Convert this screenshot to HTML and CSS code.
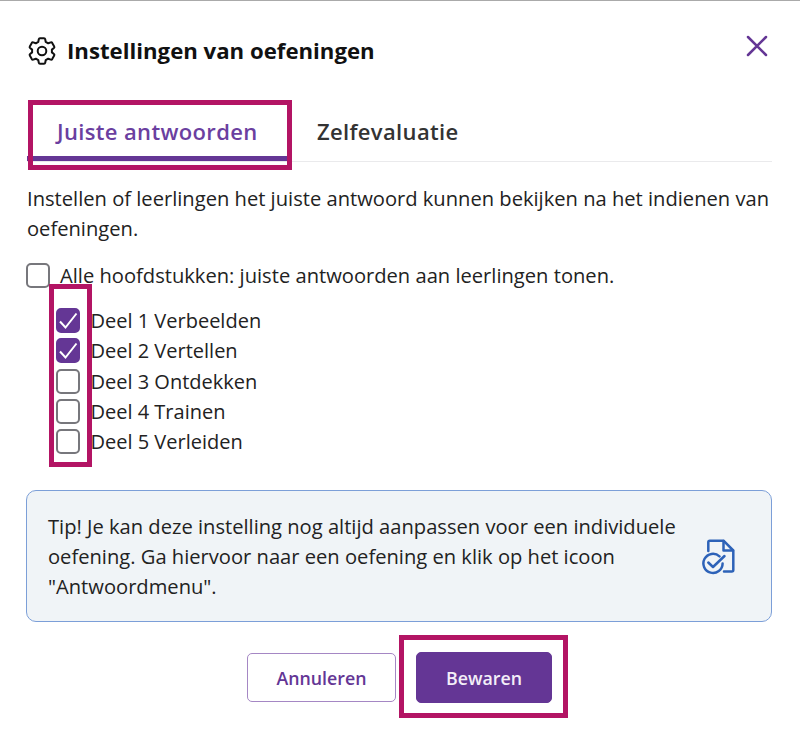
FILE: index.html
```html
<!DOCTYPE html>
<html lang="nl">
<head>
    <meta charset="UTF-8">
    <meta name="viewport" content="width=device-width, initial-scale=1.0">
    <title>Instellingen van oefeningen</title>
    <link rel="stylesheet" href="styles.css">
</head>
<body>
    <div class="modal">
        <header class="modal-header">
            <svg class="gear-icon" viewBox="0 0 28 28">
                <path d="M12 1.2H16Q17 1.2 17.2 2.2L17.7 4.8L20.2 6.3L22.8 5.4Q23.7 5.1 24.2 5.9L26.2 9.4Q26.7 10.3 25.9 11L23.9 12.6V15.4L25.9 17Q26.7 17.7 26.2 18.6L24.2 22.1Q23.7 22.9 22.8 22.6L20.2 21.7L17.7 23.2L17.2 25.8Q17 26.8 16 26.8H12Q11 26.8 10.8 25.8L10.3 23.2L7.8 21.7L5.2 22.6Q4.3 22.9 3.8 22.1L1.8 18.6Q1.3 17.7 2.1 17L4.1 15.4V12.6L2.1 11Q1.3 10.3 1.8 9.4L3.8 5.9Q4.3 5.1 5.2 5.4L7.8 6.3L10.3 4.8L10.8 2.2Q11 1.2 12 1.2Z"/>
                <circle cx="14" cy="14" r="4.3"/>
            </svg>
            <h1>Instellingen van oefeningen</h1>
            <button class="close-button" aria-label="Sluiten">
                <svg viewBox="0 0 22 22"><path d="M2 2L20 20M20 2L2 20"/></svg>
            </button>
        </header>

        <nav class="tabs">
            <a class="tab active highlight">Juiste antwoorden</a>
            <a class="tab">Zelfevaluatie</a>
        </nav>

        <main>
            <p class="intro">Instellen of leerlingen het juiste antwoord kunnen bekijken na het indienen van oefeningen.</p>

            <label class="check-all"><input type="checkbox"><span>Alle hoofdstukken: juiste antwoorden aan leerlingen tonen.</span></label>

            <div class="chapters highlight">
                <label><input type="checkbox" checked><span>Deel 1 Verbeelden</span></label>
                <label><input type="checkbox" checked><span>Deel 2 Vertellen</span></label>
                <label><input type="checkbox"><span>Deel 3 Ontdekken</span></label>
                <label><input type="checkbox"><span>Deel 4 Trainen</span></label>
                <label><input type="checkbox"><span>Deel 5 Verleiden</span></label>
            </div>

            <div class="tip">
                <p>Tip! Je kan deze instelling nog altijd aanpassen voor een individuele oefening. Ga hiervoor naar een oefening en klik op het icoon "Antwoordmenu".</p>
                <svg class="answer-icon" viewBox="0 0 34 36">
                    <path d="M6.3 12V3.2Q6.3 1.7 7.8 1.7H21.5L31.3 11.5V31Q31.3 32.5 29.8 32.5H22"/>
                    <path d="M21.5 2V11.5H31"/>
                    <path d="M17.5 17.3A9.6 9.6 0 1 0 20.6 24.5"/>
                    <path d="M6.3 23.5L11 28L22.5 17"/>
                </svg>
            </div>
        </main>

        <footer class="buttons">
            <button class="button">Annuleren</button>
            <div class="save highlight">
                <button class="button primary">Bewaren</button>
            </div>
        </footer>
    </div>
</body>
</html>
```

FILE: styles.css
```css
* {
    box-sizing: border-box;
}

body {
    margin: 0;
    background-color: #fff;
    color: #222;
    font-family: "Open Sans", sans-serif;
    font-size: 20px;
    line-height: 30px;
}

.modal {
    height: 730px;
    padding: 0 28px 0 27px;
    border-top: 1px solid #aaa;
    overflow: hidden;
}

/* header */
.modal-header {
    display: flex;
    align-items: center;
    height: 99px;
}

.gear-icon {
    width: 28px;
    height: 28px;
    margin-left: 0.5px;
    fill: none;
    stroke: #111;
    stroke-width: 2;
    stroke-linejoin: round;
}

h1 {
    margin: 1px 0 0 11.5px;
    color: #111;
    font-size: 22.2px;
    font-weight: 700;
}

.close-button {
    display: flex;
    margin: 0 4px 10px auto;
    padding: 0;
    background: none;
    border: none;
    cursor: pointer;
}

.close-button svg {
    width: 22px;
    height: 22px;
    fill: none;
    stroke: #643695;
    stroke-width: 2.5;
    stroke-linecap: round;
}

/* tabs */
.tabs {
    display: flex;
    height: 62px;
    border-bottom: 1px solid #eaeaec;
}

.tab {
    padding: 16px 30px 0;
    color: #333;
    font-size: 22px;
    font-weight: 600;
    letter-spacing: 0.35px;
    white-space: nowrap;
}

.tab.active {
    width: 260px;
    border-bottom: 5px solid #643695;
    color: #6b3fa0;
}

/* pink frames */
.highlight {
    position: relative;
}

.highlight::after {
    content: "";
    position: absolute;
    box-sizing: border-box;
    border: 5px solid #b31464;
    pointer-events: none;
}

.tab.highlight::after {
    inset: 0 -5px -14px 1px;
}

.chapters.highlight::after {
    top: -22px;
    left: -7px;
    width: 43px;
    height: 183px;
}

.save.highlight::after {
    inset: -17px -16px -15px -17px;
}

/* content */
.intro {
    margin: 21px 0 17px;
    font-size: 20.15px;
}

.check-all {
    display: flex;
    align-items: center;
    height: 30px;
    margin-left: -1px;
    font-size: 20.15px;
}

.check-all span {
    margin-left: 10px;
}

.chapters {
    margin: 16px 0 0 29px;
}

.chapters label {
    display: flex;
    align-items: center;
    height: 30.3px;
}

.chapters input {
    margin-bottom: 1px;
}

.chapters span {
    margin-left: 10.5px;
}

input {
    flex: none;
    width: 24px;
    height: 25px;
    margin: 0;
    appearance: none;
    background-color: #fff;
    border: 2px solid #77777c;
    border-radius: 5px;
}

input:checked {
    background: #643695 url("data:image/svg+xml,%3Csvg xmlns='http://www.w3.org/2000/svg' viewBox='0 0 24 25'%3E%3Cpath d='M4 13.5L9.5 19.5L20.5 5.5' fill='none' stroke='white' stroke-width='2'/%3E%3C/svg%3E") center / 24px 25px no-repeat;
    border-color: #643695;
}

.tip {
    display: flex;
    align-items: center;
    height: 132px;
    margin: 33px 0 0 -1px;
    padding: 0 35px 0 21px;
    background-color: #f0f4f7;
    border: 1px solid #7c9fd8;
    border-radius: 10px;
    font-size: 20.15px;
}

.tip p {
    width: 640px;
    margin: 0 0 1px;
}

.answer-icon {
    flex: none;
    width: 34px;
    height: 36px;
    margin: 2px 0 0 auto;
    fill: none;
    stroke: #2d62b8;
    stroke-width: 2.5;
    stroke-linecap: round;
    stroke-linejoin: round;
}

/* buttons */
.buttons {
    display: flex;
    align-items: center;
    justify-content: center;
    gap: 20px;
    margin-top: 30px;
}

.button {
    display: block;
    width: 149px;
    height: 49px;
    padding: 0;
    background-color: #fff;
    border: 1px solid #a587c4;
    border-radius: 5px;
    color: #643695;
    font: 600 17.8px "Open Sans", sans-serif;
    cursor: pointer;
}

.button.primary {
    width: 136px;
    height: 51px;
    background-color: #643695;
    border-color: #643695;
    color: #f3eef8;
}
```
